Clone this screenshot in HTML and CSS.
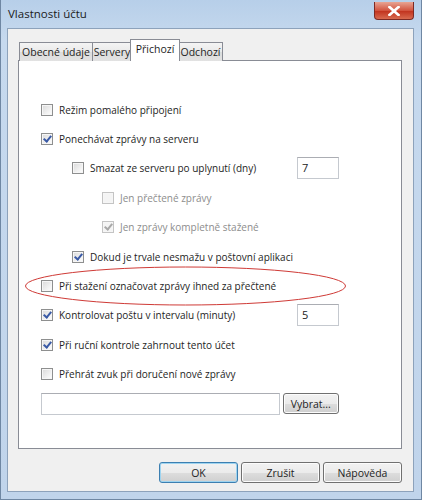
FILE: index.html
```html
<!doctype html>
<html>
<head>
    <title>Vlastnosti účtu</title>
    <link rel="stylesheet" href="styles.css">
</head>
<body>
<div class="window">
    <div class="titlebar">
        <span class="title">Vlastnosti účtu</span>
        <span class="close">
            <svg width="12" height="10" viewBox="0 0 12 10"><path d="M1.5 1 L10.5 9 M10.5 1 L1.5 9" stroke="#fff" stroke-width="2.6" stroke-linecap="square"/></svg>
        </span>
    </div>
    <div class="dialog">
        <div class="tabs">
            <span class="tab t1">Obecné údaje</span>
            <span class="tab t2">Servery</span>
            <span class="tab t3 active">Přichozí</span>
            <span class="tab t4">Odchozí</span>
        </div>
        <div class="panel">
            <div class="row"><span class="box"></span>Režim pomalého připojení</div>
            <div class="row"><span class="box checked"></span>Ponechávat zprávy na serveru</div>
            <div class="row l2"><span class="box"></span>Smazat ze serveru po uplynutí (dny)<span class="num">7</span></div>
            <div class="row l3 disabled"><span class="box"></span>Jen přečtené zprávy</div>
            <div class="row l3 disabled"><span class="box checked"></span>Jen zprávy kompletně stažené</div>
            <div class="row l2"><span class="box checked"></span>Dokud je trvale nesmažu v poštovní aplikaci</div>
            <div class="row"><span class="box"></span>Při stažení označovat zprávy ihned za přečtené</div>
            <div class="row"><span class="box checked"></span>Kontrolovat poštu v intervalu (minuty)<span class="num">5</span></div>
            <div class="row"><span class="box checked"></span>Při ruční kontrole zahrnout tento účet</div>
            <div class="row"><span class="box"></span>Přehrát zvuk při doručení nové zprávy</div>
            <div class="row file">
                <span class="field"></span>
                <button class="btn pick">Vybrat...</button>
            </div>
        </div>
        <div class="buttons">
            <button class="btn focus">OK</button>
            <button class="btn">Zrušit</button>
            <button class="btn">Nápověda</button>
        </div>
    </div>
    <svg class="mark" width="422" height="500" viewBox="0 0 422 500">
        <ellipse cx="185.5" cy="286" rx="160" ry="19" fill="none" stroke="#cf3a36" stroke-width="1"/>
    </svg>
</div>
</body>
</html>
```

FILE: styles.css
```css
body {
    margin: 0;
    font-family: "Open Sans", "Noto Sans", sans-serif;
    font-size: 10px;
    color: #1e1e1e;
}
.window {
    position: relative;
    width: 422px;
    height: 500px;
    box-sizing: border-box;
    display: flex;
    flex-direction: column;
    background: linear-gradient(#b7cfe9, #c6d9ee 40px, #c0d4eb);
    border: 1px solid #6f87a3;
    border-top: none;
}
.titlebar {
    height: 28px;
    display: flex;
    align-items: flex-start;
    padding-left: 7px;
}
.title {
    margin-top: 6px;
    font-size: 11.5px;
    color: #1b1b1b;
}
.close {
    margin-left: auto;
    margin-right: 7px;
    margin-top: 2px;
    width: 40px;
    height: 18px;
    box-sizing: border-box;
    border: 1px solid #7d2a24;
    border-top: none;
    border-radius: 0 0 4px 4px;
    background: linear-gradient(#e8a493, #d2543f 50%, #c0301c 51%, #d86a4f);
    display: flex;
    align-items: center;
    justify-content: center;
}
.dialog {
    flex: 1;
    margin: 0 7px 7px 6px;
    background: #f0f0f0;
    border: 1px solid #8da2bb;
    display: flex;
    flex-direction: column;
    padding: 10px 11px 0 10px;
}
.tabs {
    display: flex;
    align-items: flex-end;
    height: 22px;
    margin-bottom: -1px;
    position: relative;
    z-index: 1;
    padding-left: 1px;
}
.tab {
    height: 19px;
    box-sizing: border-box;
    border: 1px solid #898c95;
    border-bottom: none;
    margin-right: -1px;
    background: linear-gradient(#f4f4f4, #e9e9e9 50%, #dcdcdc 51%, #e2e2e2);
    text-align: center;
    line-height: 18px;
    white-space: nowrap;
    font-size: 10.5px;
}
.t1 { width: 74px; }
.t2 { width: 40px; }
.t3 { width: 49px; }
.t4 { width: 45px; }
.tab.active {
    height: 22px;
    background: #fff;
    margin-left: -1px;
    margin-right: -2px;
    width: 50px;
    line-height: 18px;
    position: relative;
    z-index: 2;
}
.panel {
    height: 389px;
    box-sizing: border-box;
    border: 1px solid #898c95;
    background: #fff;
    padding: 34px 62px 0 22px;
}
.row {
    height: 29.4px;
    display: flex;
    align-items: center;
    white-space: nowrap;
}
.l2 { padding-left: 31px; }
.l3 { padding-left: 61px; }
.disabled { color: #8d8d8d; }
.box {
    width: 12px;
    height: 12px;
    box-sizing: border-box;
    border: 1px solid #8e8f8f;
    background: linear-gradient(135deg, #d9d9d9, #f4f4f4 70%, #fff);
    box-shadow: inset 0 0 0 1px #f6f6f6;
    margin-right: 6px;
    flex: none;
    position: relative;
}
.disabled .box {
    border-color: #c4c4c4;
    background: #f4f4f4;
}
.box.checked::after {
    content: "";
    position: absolute;
    left: 3px;
    top: 0px;
    width: 3px;
    height: 6px;
    border: solid #3a5aa6;
    border-width: 0 2px 2px 0;
    transform: rotate(40deg);
}
.disabled .box.checked::after {
    border-color: #a8a8a8;
}
.num {
    margin-left: auto;
    width: 42px;
    height: 22px;
    box-sizing: border-box;
    border: 1px solid #c5c9cf;
    border-top-color: #abadb3;
    padding-left: 4px;
    line-height: 20px;
    font-size: 11px;
    color: #222;
}
.file .field {
    width: 271px;
    height: 22px;
    box-sizing: border-box;
    border: 1px solid #c5c9cf;
    border-top-color: #abadb3;
}
.btn {
    font: inherit;
    font-size: 10.5px;
    color: #1e1e1e;
    height: 21px;
    box-sizing: border-box;
    border: 1px solid #707070;
    border-radius: 3px;
    background: linear-gradient(#f2f2f2, #ebebeb 50%, #dddddd 51%, #cfcfcf);
    box-shadow: inset 0 0 0 1px #fcfcfc;
    padding: 0;
}
.pick {
    width: 64px;
    margin-left: 3px;
}
.buttons {
    display: flex;
    justify-content: flex-end;
    gap: 3px;
    margin-top: 13px;
}
.buttons .btn {
    width: 79px;
}
.btn.focus {
    border-color: #3c7fb1;
    box-shadow: inset 0 0 0 1px #9ed4f0;
}
.mark {
    position: absolute;
    left: -1px;
    top: 0;
    pointer-events: none;
}
```
